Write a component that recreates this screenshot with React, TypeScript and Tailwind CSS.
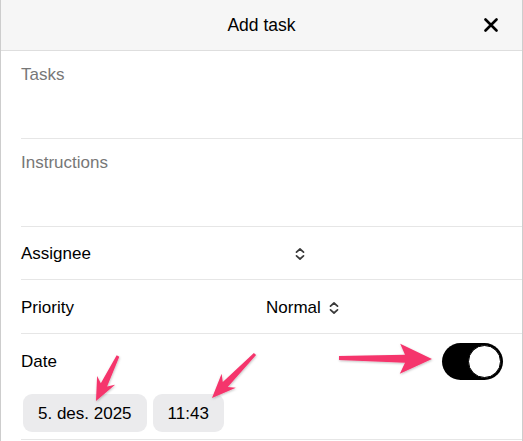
import React from "react";

function Chevrons() {
  return (
    <svg width="10" height="12" viewBox="0 0 10 12" fill="none" stroke="#3a3a3a" strokeWidth="1.7" strokeLinecap="round" strokeLinejoin="round">
      <path d="M1.5 4.2 L5 1 L8.5 4.2" />
      <path d="M1.5 7.8 L5 11 L8.5 7.8" />
    </svg>
  );
}

type P = [number, number];
function arrowPoints(tail: P, tip: P, tw: number, sw: number, hl: number, hw: number) {
  const dx = tip[0] - tail[0];
  const dy = tip[1] - tail[1];
  const len = Math.hypot(dx, dy);
  const ux = dx / len, uy = dy / len;
  const px = -uy, py = ux;
  const bx = tip[0] - ux * hl, by = tip[1] - uy * hl;
  const pts: P[] = [
    [tail[0] + px * tw / 2, tail[1] + py * tw / 2],
    [bx + px * sw / 2 + ux * 3, by + py * sw / 2 + uy * 3],
    [bx + px * hw - ux * 2, by + py * hw - uy * 2],
    [tip[0], tip[1]],
    [bx - px * hw - ux * 2, by - py * hw - uy * 2],
    [bx - px * sw / 2 + ux * 3, by - py * sw / 2 + uy * 3],
    [tail[0] - px * tw / 2, tail[1] - py * tw / 2],
  ];
  return pts.map((p) => p[0].toFixed(1) + "," + p[1].toFixed(1)).join(" ");
}

export default function App() {
  return (
    <div className="relative w-[523px] h-[441px] overflow-hidden bg-white border-x border-[#cdcdcd] text-[17px] text-black" style={{ fontFamily: '"Liberation Sans", Arial, sans-serif' }}>
      <div className="grid grid-cols-[1fr_auto_1fr] items-center h-[51px] bg-[#f6f6f6] border-b border-[#dedede]">
        <div />
        <div className="text-[17.5px] pt-[1px]">Add task</div>
        <div className="flex justify-end pr-[24px]">
          <svg width="14" height="14" viewBox="0 0 14 14" stroke="#000" strokeWidth="2.6" strokeLinecap="round">
            <path d="M1.5 1.5 L12.5 12.5 M12.5 1.5 L1.5 12.5" />
          </svg>
        </div>
      </div>
      <div className="pl-[20px]">
        <div className="h-[88px] pt-[14px] border-b border-[#e6e6e6] text-[#777] leading-[20px]">Tasks</div>
        <div className="h-[88px] pt-[14px] border-b border-[#e6e6e6] text-[#777] leading-[20px]">Instructions</div>
        <div className="flex items-center h-[53px] pt-[2px] border-b border-[#e6e6e6]">
          <div className="w-[245px]">Assignee</div>
          <div className="pl-[29px] flex items-center"><Chevrons /></div>
        </div>
        <div className="flex items-center h-[54px] pt-[2px] border-b border-[#e6e6e6]">
          <div className="w-[245px]">Priority</div>
          <div className="flex items-center gap-[8px]">
            <span>Normal</span>
            <Chevrons />
          </div>
        </div>
        <div className="border-b border-[#e6e6e6] pb-[7px]">
          <div className="flex items-center justify-between h-[54px] pr-[19px]">
            <div className="pt-[2px]">Date</div>
            <div className="w-[61px] h-[37px] rounded-full bg-black p-[2px] flex justify-end">
              <div className="w-[33px] h-[33px] rounded-full bg-white border-[1.5px] border-black" />
            </div>
          </div>
          <div className="flex gap-[6px] ml-[2px] mt-[6px]">
            <div className="h-[38px] px-[15px] pt-[1px] flex items-center rounded-[9px] bg-[#ebebed]">5. des. 2025</div>
            <div className="h-[38px] px-[15px] pt-[1px] flex items-center rounded-[9px] bg-[#ebebed]">11:43</div>
          </div>
        </div>
      </div>
      <svg className="absolute left-0 top-0 pointer-events-none" width="523" height="441" viewBox="0 0 523 441">
        <defs>
          <filter id="sh" x="-20%" y="-20%" width="140%" height="140%">
            <feDropShadow dx="0.5" dy="1" stdDeviation="1" floodColor="#000" floodOpacity="0.25" />
          </filter>
        </defs>
        <g fill="#f5356c" filter="url(#sh)">
          <polygon points={arrowPoints([117, 356], [95, 401], 3, 7, 21, 10)} />
          <polygon points={arrowPoints([254, 354], [211, 398], 3, 7, 22, 10)} />
          <polygon points={arrowPoints([338, 358], [431, 359], 4, 8, 30, 15)} />
        </g>
      </svg>
    </div>
  );
}
